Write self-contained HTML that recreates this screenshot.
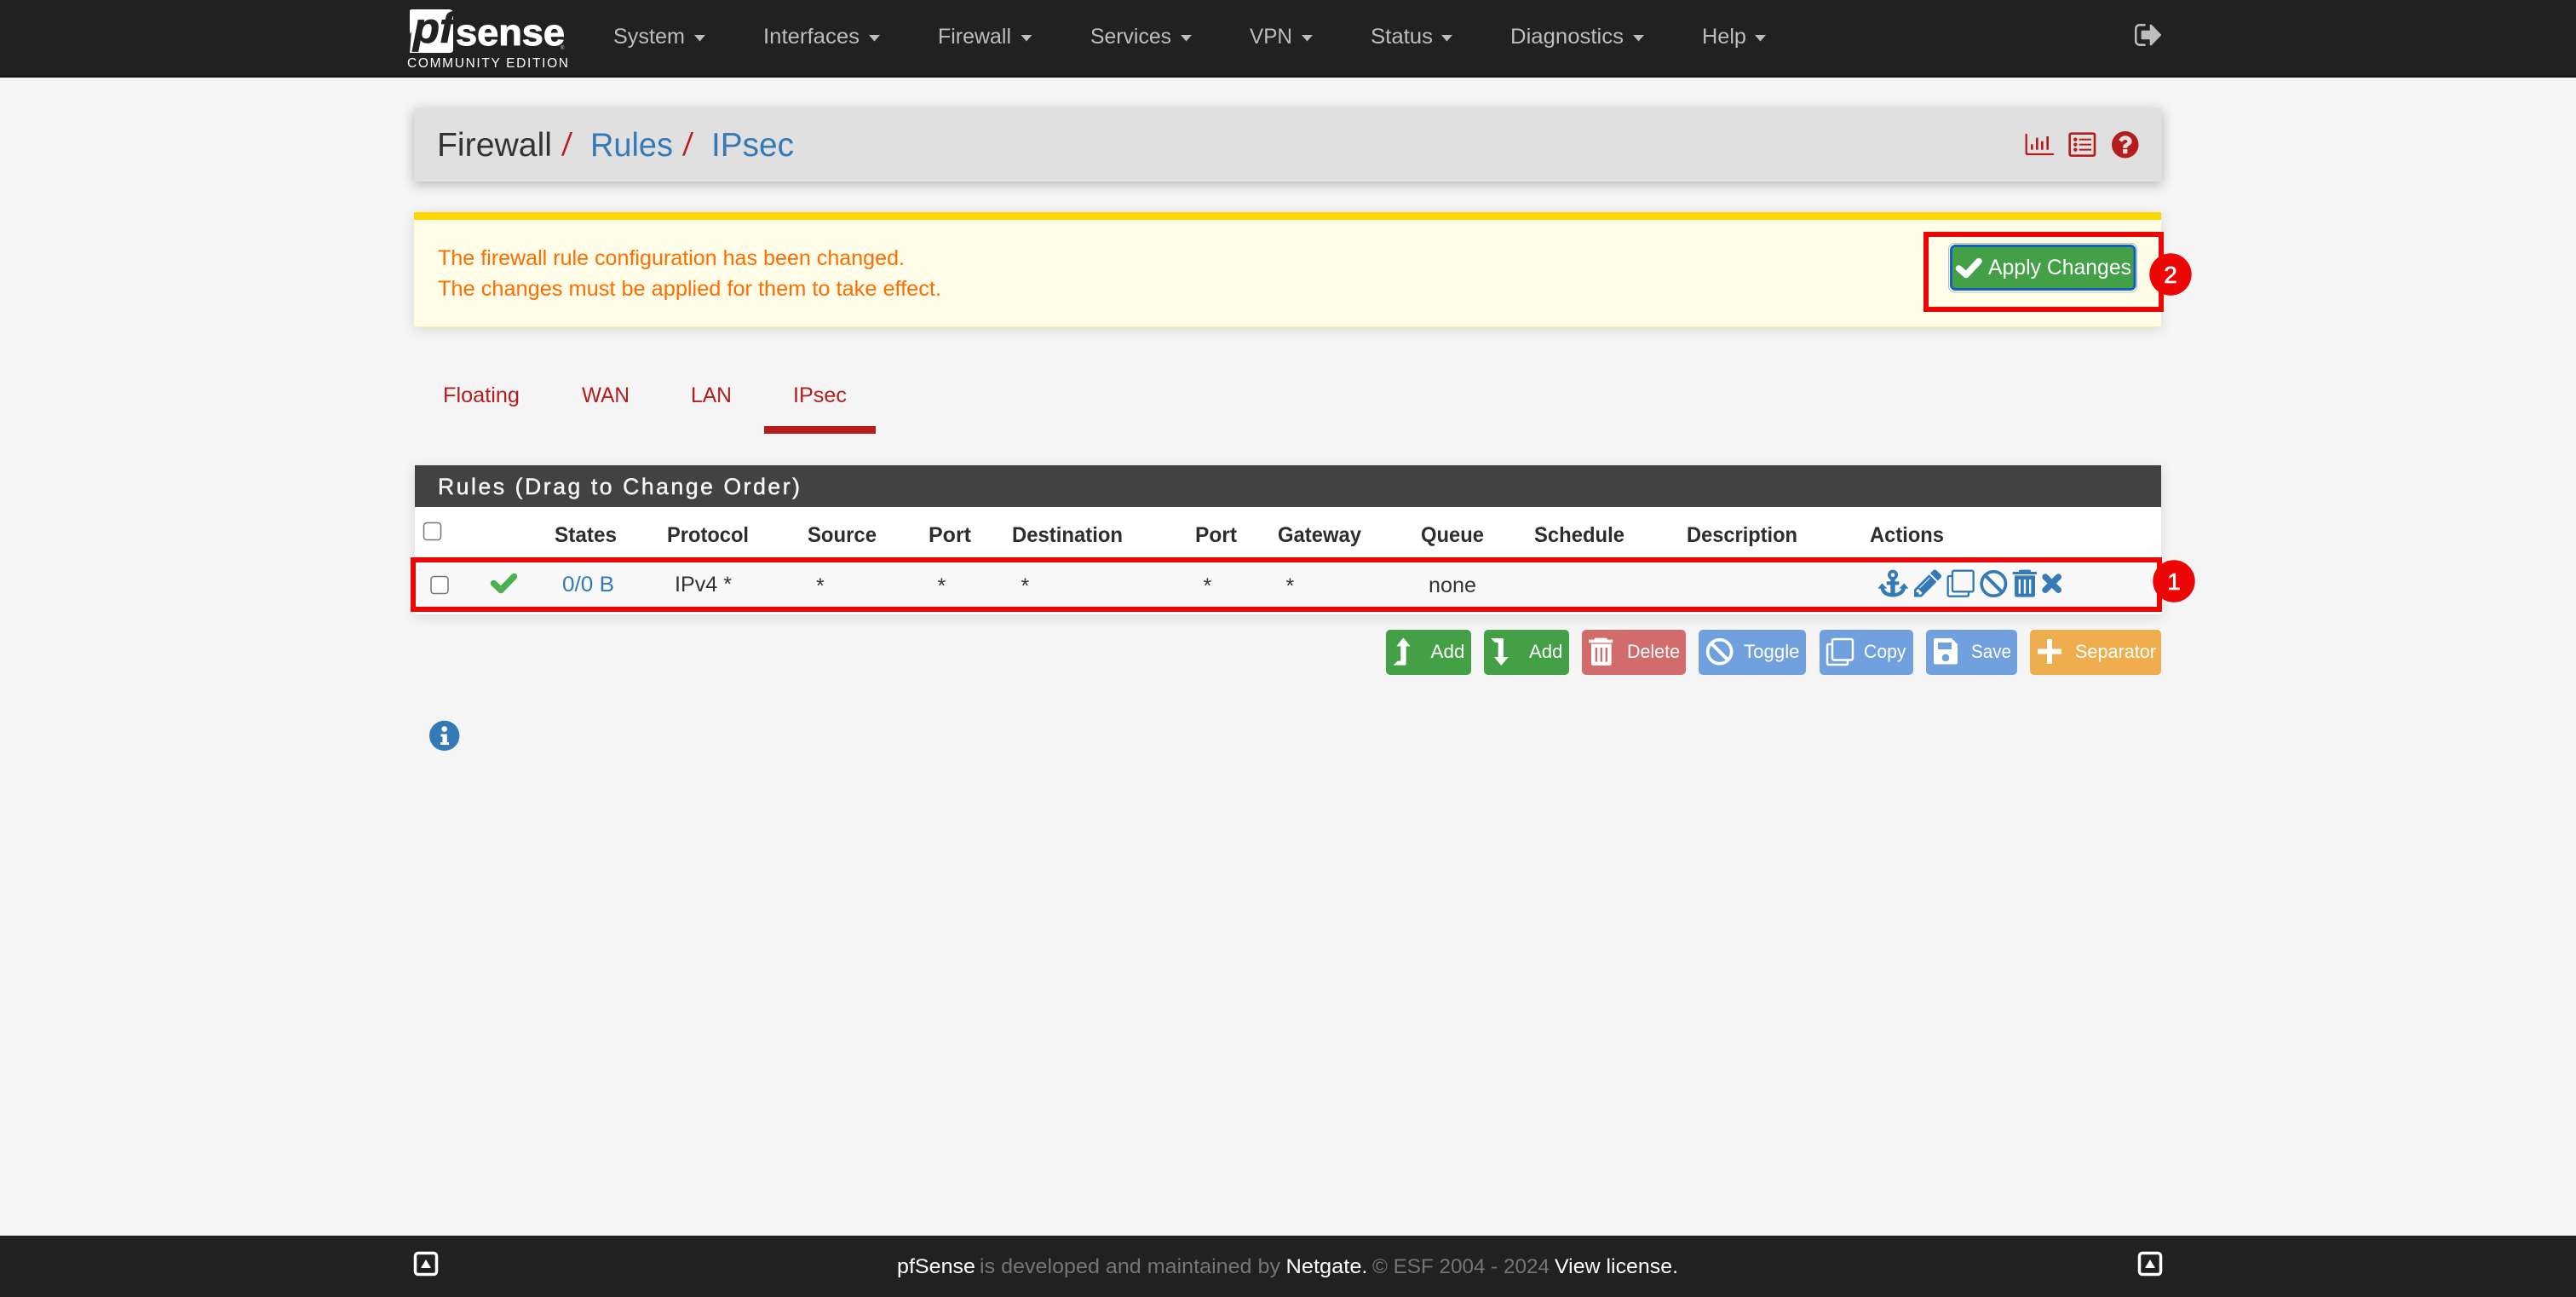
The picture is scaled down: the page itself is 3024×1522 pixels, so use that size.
<!DOCTYPE html>
<html lang="en">
<head>
<meta charset="utf-8">
<title>pfSense - Firewall: Rules: IPsec</title>
<style>
html,body{margin:0;padding:0;background:#f5f5f5;width:3024px;height:1522px;overflow:hidden}
svg{display:block}
text{font-family:"Liberation Sans",Arial,sans-serif;font-size:25px;white-space:pre}
.n{fill:#bdbdbd}
.t{fill:#b71c1c}
.h{fill:#2d2d2d;font-weight:bold}
.c{fill:#333}
.b{fill:#fff;font-size:22px}
.f{font-size:24.5px}
.w{fill:#fff}
.g{fill:#757575}
.o{fill:#ff6d00}
.crumb{font-size:39px}
</style>
</head>
<body>
<svg xmlns="http://www.w3.org/2000/svg" width="3024" height="1522" viewBox="0 0 3024 1522">
<defs>
<filter id="s1" x="-5%" y="-50%" width="110%" height="200%"><feDropShadow dx="0" dy="3" stdDeviation="7" flood-color="#000" flood-opacity=".28"/></filter>
<filter id="s2" x="-5%" y="-50%" width="110%" height="200%"><feDropShadow dx="0" dy="3" stdDeviation="7" flood-color="#000" flood-opacity=".12"/></filter>
</defs>

<rect width="3024" height="1522" fill="#f5f5f5"/>

<!-- navbar -->
<rect width="3024" height="90" fill="#212121"/>
<rect y="89.500" width="3024" height="1.500" fill="#0c0c0c"/>

<!-- logo -->
<path d="M485 11H527Q532 11 532 16V58Q532 62 528 62H481Z" fill="#fff"/>
<path d="M481 13Q481 11 484 11H500L481 40Z" fill="#fff"/>
<text x="485" y="50" style="font-size:50px;font-weight:bold;font-style:italic;fill:#212121;stroke:#212121;stroke-width:.8" textLength="48" lengthAdjust="spacingAndGlyphs">pf</text>
<text x="535" y="53" style="font-size:44px;font-weight:bold;fill:#fff;stroke:#fff;stroke-width:1" textLength="128" lengthAdjust="spacingAndGlyphs">sense</text>
<text x="658" y="58" style="font-size:6px;fill:#ddd">®</text>
<text x="478" y="79" style="font-size:15.500px;fill:#fff" textLength="189" lengthAdjust="spacing">COMMUNITY EDITION</text>

<!-- nav items -->
<text class="n" x="720" y="51" textLength="84" lengthAdjust="spacingAndGlyphs">System</text>
<polygon class="n" points="815,41 828,41 821.500,48.500"/>
<text class="n" x="896" y="51" textLength="113" lengthAdjust="spacingAndGlyphs">Interfaces</text>
<polygon class="n" points="1020,41 1033,41 1026.500,48.500"/>
<text class="n" x="1101" y="51" textLength="86" lengthAdjust="spacingAndGlyphs">Firewall</text>
<polygon class="n" points="1198.500,41 1211.500,41 1205,48.500"/>
<text class="n" x="1280" y="51" textLength="95" lengthAdjust="spacingAndGlyphs">Services</text>
<polygon class="n" points="1386,41 1399,41 1392.500,48.500"/>
<text class="n" x="1467" y="51" textLength="50" lengthAdjust="spacingAndGlyphs">VPN</text>
<polygon class="n" points="1528,41 1541,41 1534.500,48.500"/>
<text class="n" x="1609" y="51" textLength="73" lengthAdjust="spacingAndGlyphs">Status</text>
<polygon class="n" points="1692,41 1705,41 1698.500,48.500"/>
<text class="n" x="1773" y="51" textLength="133" lengthAdjust="spacingAndGlyphs">Diagnostics</text>
<polygon class="n" points="1917,41 1930,41 1923.500,48.500"/>
<text class="n" x="1998" y="51" textLength="52" lengthAdjust="spacingAndGlyphs">Help</text>
<polygon class="n" points="2060,41 2073,41 2066.500,48.500"/>

<!-- logout -->
<svg x="2506" y="28" width="31" height="26" viewBox="64 256 1568 1280" preserveAspectRatio="none">
<path fill="#bdbdbd" d="M704 1440q0 4 1 20t.5 26.500-3 23.500-10 19.500-20.500 6.500h-320q-119 0-203.500-84.500t-84.500-203.500v-704q0-119 84.500-203.500t203.500-84.500h320q13 0 22.500 9.500t9.500 22.500q0 4 1 20t.5 26.500-3 23.500-10 19.500-20.500 6.500h-320q-66 0-113 47t-47 113v704q0 66 47 113t113 47h312l11.500 1 11.500 3 8 5.500 7 9 2 13.500zm928-544q0 26-19 45l-544 544q-19 19-45 19t-45-19-19-45v-288h-448q-26 0-45-19t-19-45v-384q0-26 19-45t45-19h448v-288q0-26 19-45t45-19 45 19l544 544q19 19 19 45z"/>
</svg>

<!-- breadcrumb panel -->
<rect x="486" y="127" width="2052" height="86" rx="2" fill="#e0e0e0" filter="url(#s1)"/>
<text class="crumb" x="513" y="183" fill="#333" textLength="135" lengthAdjust="spacingAndGlyphs">Firewall</text>
<text class="crumb" x="658" y="183" fill="#b71c1c" stroke="#e0e0e0" stroke-width="1" textLength="15" lengthAdjust="spacingAndGlyphs">/</text>
<text class="crumb" x="693" y="183" fill="#337ab7" textLength="97" lengthAdjust="spacingAndGlyphs">Rules</text>
<text class="crumb" x="800" y="183" fill="#b71c1c" stroke="#e0e0e0" stroke-width="1" textLength="15" lengthAdjust="spacingAndGlyphs">/</text>
<text class="crumb" x="835" y="183" fill="#337ab7" textLength="97" lengthAdjust="spacingAndGlyphs">IPsec</text>

<!-- breadcrumb icons -->
<g transform="translate(2340 130) scale(.33333)" fill="#b71c1c">
<path d="M116 84V148Q116 153 121 153H210" fill="none" stroke="#b71c1c" stroke-width="7" stroke-linecap="round"/>
<rect x="132" y="118" width="8" height="19"/>
<rect x="150" y="95" width="8" height="42"/>
<rect x="168" y="107" width="8" height="30"/>
<rect x="187" y="90" width="8" height="47"/>
<rect x="269" y="80" width="88" height="78" rx="5" fill="none" stroke="#b71c1c" stroke-width="8"/>
<circle cx="289" cy="101" r="6.500"/><circle cx="289" cy="119" r="6.500"/><circle cx="289" cy="137" r="6.500"/>
<rect x="302" y="98" width="43" height="6"/><rect x="302" y="116" width="43" height="6"/><rect x="302" y="134" width="43" height="6"/>
</g>
<svg x="2479" y="154" width="31.500" height="31.500" viewBox="128 128 1536 1536">
<path fill="#b71c1c" d="M1024 1376v-192q0-14-9-23t-23-9h-192q-14 0-23 9t-9 23v192q0 14 9 23t23 9h192q14 0 23-9t9-23zm256-672q0-88-55.500-163t-138.500-116-170-41q-243 0-371 213-15 24 8 42l132 100q7 6 19 6 16 0 25-12 53-68 86-92 34-24 86-24 48 0 85.500 26t37.500 59q0 38-20 61t-68 45q-63 28-115.500 86.500t-52.500 125.500v36q0 14 9 23t23 9h192q14 0 23-9t9-23q0-19 21.500-49.500t54.500-49.500q32-18 49-28.500t46-35 44.500-48 28-60.500 12.500-81zm384 192q0 209-103 385.500t-279.500 279.500-385.500 103-385.500-103-279.500-279.500-103-385.500 103-385.500 279.500-279.500 385.500-103 385.500 103 279.500 279.500 103 385.500z"/>
</svg>

<!-- alert -->
<rect x="486" y="249" width="2051" height="135" fill="#fffde7" filter="url(#s2)"/>
<rect x="486" y="249" width="2051" height="9" fill="#ffd600"/>
<rect x="486" y="383" width="2051" height="1.500" fill="#ffecb3"/>
<text class="o" x="514" y="311" textLength="548" lengthAdjust="spacingAndGlyphs">The firewall rule configuration has been changed.</text>
<text class="o" x="514" y="347" textLength="591" lengthAdjust="spacingAndGlyphs">The changes must be applied for them to take effect.</text>

<!-- Apply button -->
<rect x="2287.500" y="285.500" width="221" height="57.500" rx="7" fill="#fff" stroke="#b8bcb8" stroke-width="1"/>
<rect x="2290.500" y="288.500" width="215.500" height="51" rx="5" fill="#43a047" stroke="#0f62c4" stroke-width="3"/>
<path d="M2299.500 315L2308 322.500L2323 306.500" fill="none" stroke="#fff" stroke-width="7.500" stroke-linecap="round" stroke-linejoin="round"/>
<text class="w" x="2334" y="322" textLength="168" lengthAdjust="spacingAndGlyphs">Apply Changes</text>

<!-- tabs -->
<text class="t" x="520" y="472" textLength="90" lengthAdjust="spacingAndGlyphs">Floating</text>
<text class="t" x="683" y="472" textLength="56" lengthAdjust="spacingAndGlyphs">WAN</text>
<text class="t" x="811" y="472" textLength="48" lengthAdjust="spacingAndGlyphs">LAN</text>
<text class="t" x="931" y="472" textLength="63" lengthAdjust="spacingAndGlyphs">IPsec</text>
<rect x="897" y="500" width="131" height="9" fill="#b71c1c"/>

<!-- rules panel -->
<rect x="487" y="546" width="2050" height="175" fill="#fff" filter="url(#s2)"/>
<rect x="487" y="546" width="2050" height="49" fill="#424242"/>
<text x="514" y="580" style="font-size:26.500px;fill:#f5f5f5;stroke:#f5f5f5;stroke-width:.5" textLength="425" lengthAdjust="spacing">Rules (Drag to Change Order)</text>

<rect x="497.500" y="613.500" width="20" height="20" rx="3.500" fill="#fff" stroke="#767676" stroke-width="1.500"/>

<text class="h" x="651" y="636" textLength="73" lengthAdjust="spacingAndGlyphs">States</text>
<text class="h" x="783" y="636" textLength="96" lengthAdjust="spacingAndGlyphs">Protocol</text>
<text class="h" x="948" y="636" textLength="81" lengthAdjust="spacingAndGlyphs">Source</text>
<text class="h" x="1090" y="636" textLength="50" lengthAdjust="spacingAndGlyphs">Port</text>
<text class="h" x="1188" y="636" textLength="130" lengthAdjust="spacingAndGlyphs">Destination</text>
<text class="h" x="1403" y="636" textLength="49" lengthAdjust="spacingAndGlyphs">Port</text>
<text class="h" x="1500" y="636" textLength="98" lengthAdjust="spacingAndGlyphs">Gateway</text>
<text class="h" x="1668" y="636" textLength="74" lengthAdjust="spacingAndGlyphs">Queue</text>
<text class="h" x="1801" y="636" textLength="106" lengthAdjust="spacingAndGlyphs">Schedule</text>
<text class="h" x="1980" y="636" textLength="130" lengthAdjust="spacingAndGlyphs">Description</text>
<text class="h" x="2195" y="636" textLength="87" lengthAdjust="spacingAndGlyphs">Actions</text>

<!-- row -->
<rect x="487" y="657" width="2048" height="58" fill="#f9f9f9"/>
<rect x="506" y="676.500" width="20" height="20" rx="3.500" fill="#fff" stroke="#767676" stroke-width="1.500"/>
<path d="M579.500 684.500L588 692.500L603.500 676.500" fill="none" stroke="#4caf50" stroke-width="7.500" stroke-linecap="round" stroke-linejoin="round"/>
<text x="660" y="694" fill="#337ab7" textLength="61" lengthAdjust="spacingAndGlyphs">0/0 B</text>
<text class="c" x="792" y="694" textLength="67" lengthAdjust="spacingAndGlyphs">IPv4 *</text>
<text class="c" x="958" y="696">*</text>
<text class="c" x="1100.500" y="696">*</text>
<text class="c" x="1198.500" y="696">*</text>
<text class="c" x="1412.500" y="696">*</text>
<text class="c" x="1509.500" y="696">*</text>
<text class="c" x="1677" y="695" textLength="56" lengthAdjust="spacingAndGlyphs">none</text>

<!-- row action icons -->
<g transform="translate(2160 650) scale(.33333)" fill="#337ab7" stroke="none">
<circle cx="186" cy="74" r="12.500" fill="none" stroke="#337ab7" stroke-width="11"/>
<rect x="178" y="85" width="16" height="62"/>
<rect x="164" y="97" width="44" height="12"/>
<path d="M148 114Q150 144 186 145Q222 144 226 114" fill="none" stroke="#337ab7" stroke-width="13"/>
<polygon points="133,122 166,122 148,103"/>
<polygon points="241,122 208,122 226,103"/>
<rect x="396" y="59" width="74" height="74" rx="6" fill="none" stroke="#337ab7" stroke-width="7"/>
<path d="M396 78H385Q380 78 380 84V143Q380 149 386 149H447Q453 149 453 143V133" fill="none" stroke="#337ab7" stroke-width="7"/>
<!-- ban -->
<circle cx="541" cy="105" r="42.500" fill="none" stroke="#337ab7" stroke-width="11"/>
<path d="M511 75L571 135" stroke="#337ab7" stroke-width="12"/>
<!-- trash -->
<rect x="630" y="56" width="42" height="12" rx="4"/>
<rect x="608" y="63" width="85" height="9" rx="2"/>
<path d="M615 76H687V144Q687 152 679 152H623Q615 152 615 144Z"/>
<rect x="629" y="90" width="7" height="50" fill="#f9f9f9"/>
<rect x="647.500" y="90" width="7" height="50" fill="#f9f9f9"/>
<rect x="666" y="90" width="7" height="50" fill="#f9f9f9"/>
<!-- times -->
<path d="M723 81L769 127M769 81L723 127" stroke="#337ab7" stroke-width="22" stroke-linecap="round" fill="none"/>
</g>
<svg x="2247" y="668" width="32.500" height="32.500" viewBox="128 128 1536 1536">
<path fill="#337ab7" d="M491 1536l91-91-235-235-91 91v107h128v128h107zm523-928q0-22-22-22-10 0-17 7l-542 542q-7 7-7 17 0 22 22 22 10 0 17-7l542-542q7-7 7-17zm-54-192l416 416-832 832h-416v-416zm683 96q0 53-37 90l-166 166-416-416 166-165q36-38 90-38 53 0 91 38l235 234q37 39 37 91z"/>
</svg>

<!-- red annotation boxes -->
<rect x="2261" y="275" width="276" height="88" fill="none" stroke="#ec0606" stroke-width="6"/>
<rect x="485" y="657" width="2050" height="58" fill="none" stroke="#ec0606" stroke-width="6"/>
<circle cx="2548" cy="322" r="24.700" fill="#ec0606"/>
<text x="2548" y="332" text-anchor="middle" style="font-size:28px;fill:#fff;stroke:#fff;stroke-width:.6">2</text>
<circle cx="2552" cy="682" r="24.700" fill="#ec0606"/>
<text x="2552" y="692" text-anchor="middle" style="font-size:28px;fill:#fff;stroke:#fff;stroke-width:.6">1</text>

<!-- bottom buttons -->
<rect x="1627" y="739" width="100" height="53" rx="5" fill="#43a047"/>
<rect x="1742" y="739" width="100" height="53" rx="5" fill="#43a047"/>
<rect x="1857" y="739" width="122" height="53" rx="5" fill="#d26c6c"/>
<rect x="1994" y="739" width="126" height="53" rx="5" fill="#70a1de"/>
<rect x="2136" y="739" width="110" height="53" rx="5" fill="#70a1de"/>
<rect x="2261" y="739" width="107" height="53" rx="5" fill="#70a1de"/>
<rect x="2383" y="739" width="154" height="53" rx="5" fill="#f0ad4e"/>

<text class="b" x="1679.500" y="772" textLength="40" lengthAdjust="spacingAndGlyphs">Add</text>
<text class="b" x="1795" y="772" textLength="39.500" lengthAdjust="spacingAndGlyphs">Add</text>
<text class="b" x="1910" y="772" textLength="62" lengthAdjust="spacingAndGlyphs">Delete</text>
<text class="b" x="2047" y="772" textLength="65.500" lengthAdjust="spacingAndGlyphs">Toggle</text>
<text class="b" x="2188" y="772" textLength="49.500" lengthAdjust="spacingAndGlyphs">Copy</text>
<text class="b" x="2314" y="772" textLength="47" lengthAdjust="spacingAndGlyphs">Save</text>
<text class="b" x="2436" y="772" textLength="95" lengthAdjust="spacingAndGlyphs">Separator</text>

<g transform="translate(1620 735) scale(.33333)" fill="#fff">
<path d="M82 40L107 70H92V132Q92 137 87 137H47L62 122H73V70H58Z"/>
<path d="M391 42H430Q435 42 435 47V108H452L427 138L402 108H416V57H405Z"/>
<!-- trash -->
<rect x="755" y="41" width="45" height="12" rx="4"/>
<rect x="735" y="47" width="85" height="11" rx="2"/>
<path d="M744 62H815V130Q815 138 807 138H752Q744 138 744 130Z"/>
<rect x="758" y="75" width="7" height="50" fill="#d26c6c"/>
<rect x="776" y="75" width="7" height="50" fill="#d26c6c"/>
<rect x="794" y="75" width="7" height="50" fill="#d26c6c"/>
<!-- ban -->
<circle cx="1196" cy="89" r="42" fill="none" stroke="#fff" stroke-width="11"/>
<path d="M1166 59L1226 119" stroke="#fff" stroke-width="12"/>
</g>
<g fill="none" stroke="#fff" stroke-width="2.500">
<rect x="2151" y="750" width="24" height="24.500" rx="2"/>
<path d="M2151 756H2147Q2145 756 2145 758V778Q2145 780 2147 780H2167Q2169 780 2169 778V774.500"/>
</g>
<path fill="#fff" fill-rule="evenodd" d="M2272 749H2291L2298 756V777Q2298 779.500 2296 779.500H2272Q2270 779.500 2270 777V751Q2270 749 2272 749ZM2275 754V762H2291V754ZM2284 767.500A4.300 4.300 0 1 0 2284 776.100A4.300 4.300 0 1 0 2284 767.500Z"/>
<path d="M2406 750V779M2392 764.500H2420" stroke="#fff" stroke-width="6"/>

<!-- info icon -->
<circle cx="521.700" cy="863.300" r="17.700" fill="#337ab7"/>
<circle cx="521.700" cy="855.500" r="3.300" fill="#fff"/>
<path d="M517.500 861.500H524.800V871H527V874H517V871H519.500V864.500H517.500Z" fill="#fff"/>

<!-- footer -->
<rect y="1450" width="3024" height="72" fill="#212121"/>
<rect x="487.500" y="1470.500" width="25" height="25" rx="3.500" fill="none" stroke="#fff" stroke-width="3.500"/>
<polygon points="500,1478 506,1488 494,1488" fill="#fff"/>
<rect x="2511.500" y="1470.500" width="25" height="25" rx="3.500" fill="none" stroke="#fff" stroke-width="3.500"/>
<polygon points="2524,1478 2530,1488 2518,1488" fill="#fff"/>
<text class="f w" x="1053" y="1494" textLength="92" lengthAdjust="spacingAndGlyphs">pfSense</text>
<text class="f g" x="1150" y="1494" textLength="353" lengthAdjust="spacingAndGlyphs">is developed and maintained by</text>
<text class="f w" x="1509.500" y="1494" textLength="96" lengthAdjust="spacingAndGlyphs">Netgate.</text>
<text class="f g" x="1611" y="1494" textLength="208" lengthAdjust="spacingAndGlyphs">© ESF 2004 - 2024</text>
<text class="f w" x="1825" y="1494" textLength="145" lengthAdjust="spacingAndGlyphs">View license.</text>
</svg>
</body>
</html>
